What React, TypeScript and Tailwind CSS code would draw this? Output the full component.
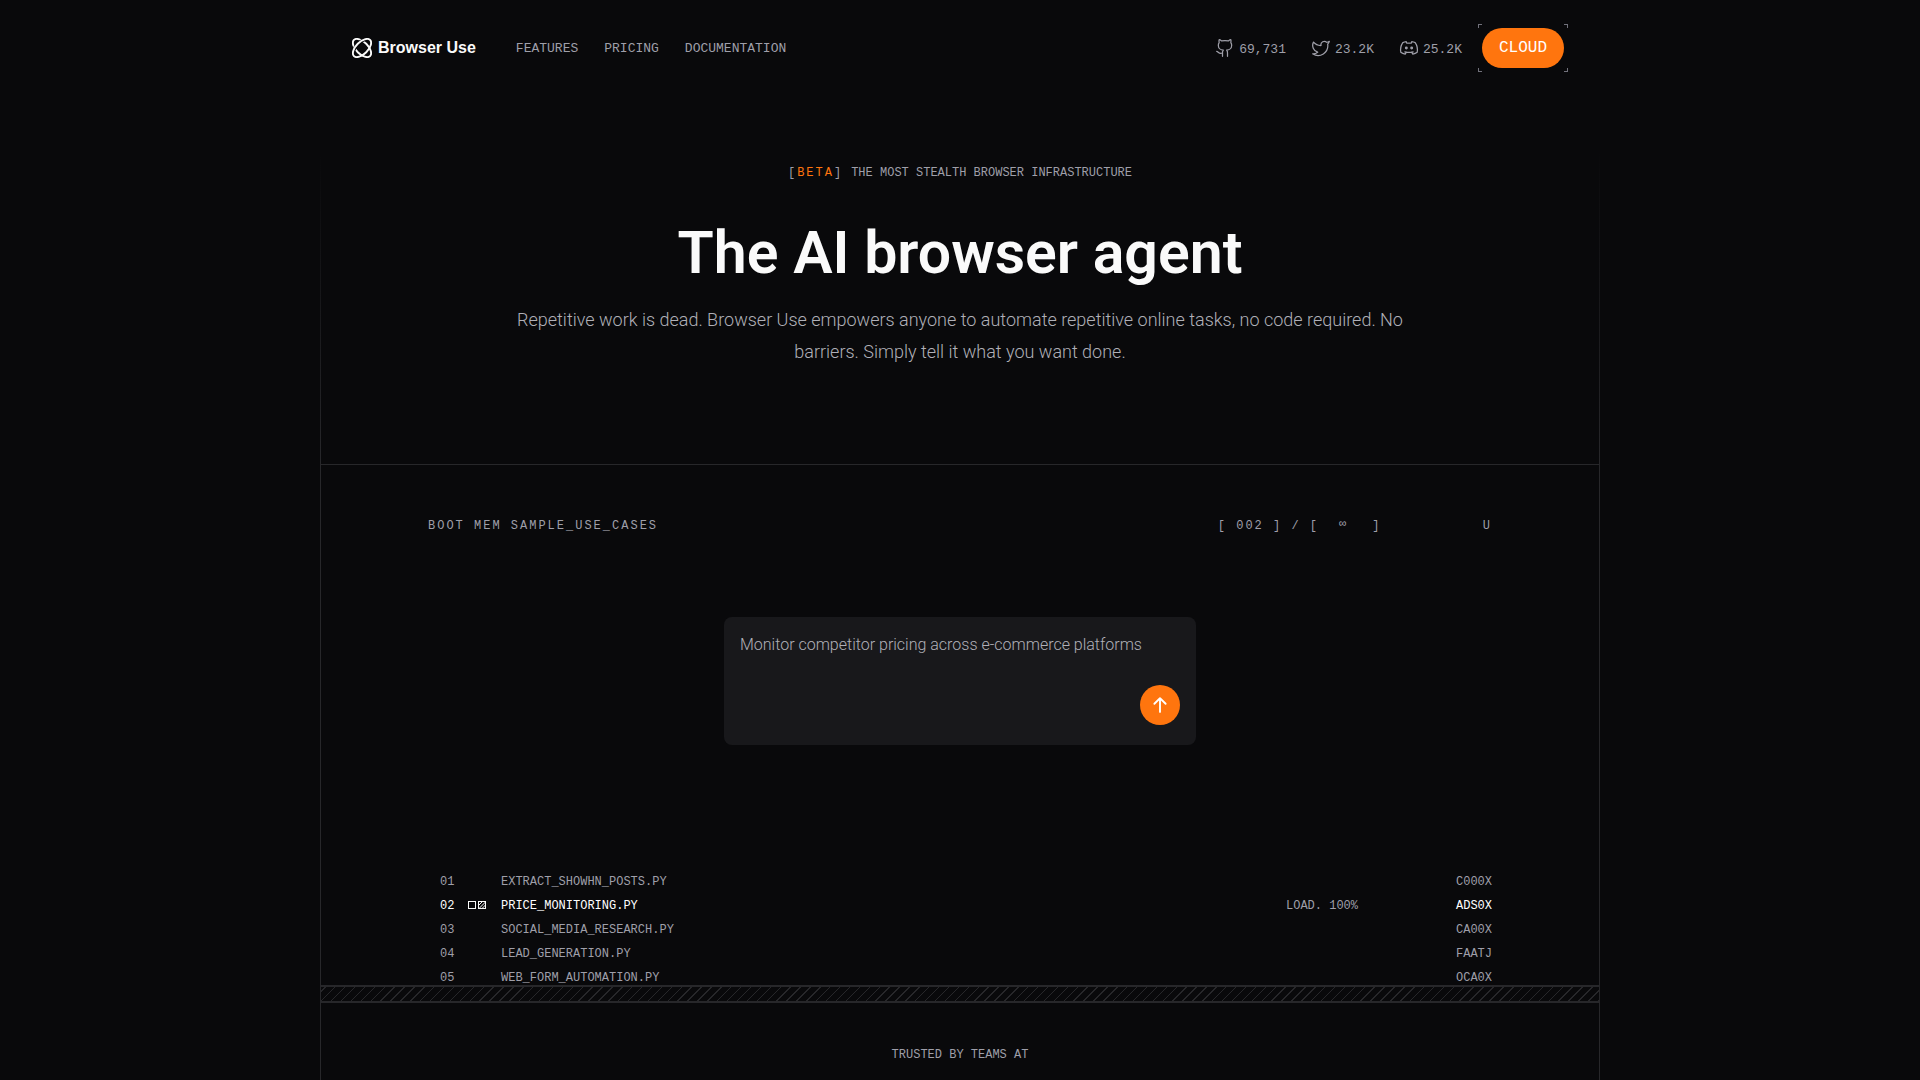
import type { ReactNode } from "react";
import { Github, Twitter } from "lucide-react";
import { PiArrowUpBold } from "react-icons/pi";

const navLinks = ["FEATURES", "PRICING", "DOCUMENTATION"];

function DiscordIcon() {
  return (
    <svg className="size-5" viewBox="0 0 24 24" fill="none" stroke="currentColor" strokeWidth="1.5" strokeLinecap="round" strokeLinejoin="round" aria-hidden="true">
      <path d="M8.6 17.2 7.4 19.4C5.5 19 3.7 18.3 2.2 17.2 1.4 13 2.2 9 4.6 5.6 5.9 5 7.3 4.6 8.7 4.4L9.5 6.3a15 15 0 0 1 5 0L15.3 4.4C16.7 4.6 18.1 5 19.4 5.6 21.8 9 22.6 13 21.8 17.2 20.3 18.3 18.5 19 16.6 19.4L15.4 17.2" />
      <path d="M7 16.6c3.3 1 6.7 1 10 0" />
      <circle cx="8.8" cy="12" r="1" fill="currentColor" />
      <circle cx="15.2" cy="12" r="1" fill="currentColor" />
    </svg>
  );
}

const socials: { label: string; icon: ReactNode; count: string }[] = [
  { label: "GitHub", icon: <Github className="size-5" strokeWidth={1.5} />, count: "69,731" },
  { label: "Twitter", icon: <Twitter className="size-5" strokeWidth={1.5} />, count: "23.2K" },
  { label: "Discord", icon: <DiscordIcon />, count: "25.2K" },
];

const scripts = [
  { num: "01", file: "EXTRACT_SHOWHN_POSTS.PY", code: "C000X", active: false },
  { num: "02", file: "PRICE_MONITORING.PY", code: "ADS0X", active: true },
  { num: "03", file: "SOCIAL_MEDIA_RESEARCH.PY", code: "CA00X", active: false },
  { num: "04", file: "LEAD_GENERATION.PY", code: "FAATJ", active: false },
  { num: "05", file: "WEB_FORM_AUTOMATION.PY", code: "OCA0X", active: false },
];

function Logo() {
  return (
    <svg className="size-5" viewBox="0 0 20 20" fill="none" aria-hidden="true">
      <ellipse cx="10" cy="10" rx="11.4" ry="6" transform="rotate(45 10 10)" stroke="#fafafa" strokeWidth="1.9" />
      <path d="M1.9 18.1 C-0.4 15.8 1.6 10.2 6 6 C10.2 1.6 15.8 -0.4 18.1 1.9" stroke="#09090b" strokeWidth="3.4" />
      <ellipse cx="10" cy="10" rx="11.4" ry="6" transform="rotate(-45 10 10)" stroke="#fafafa" strokeWidth="1.9" />
    </svg>
  );
}

function Header() {
  return (
    <header className="mx-auto flex w-full max-w-7xl items-center px-8 py-6">
      <a href="#" className="flex items-center gap-1.5 text-base font-bold text-zinc-50">
        <Logo />
        Browser Use
      </a>
      <nav className="ml-10 flex gap-[26px] pt-0.5 font-['Liberation_Mono',monospace] text-[13px] leading-5 text-[#9f9fa9]">
        {navLinks.map((link) => (
          <a key={link} href="#">{link}</a>
        ))}
      </nav>
      <div className="ml-auto flex items-center gap-[25px] font-['Liberation_Mono',monospace] text-[13px] leading-5 text-[#9f9fa9]">
        {socials.map((s) => (
          <a key={s.label} href="#" aria-label={s.label} className="flex items-center gap-1">
            {s.icon}
            <span className="pt-1">{s.count}</span>
          </a>
        ))}
      </div>
      <div className="relative ml-4 p-1">
        <span className="absolute top-0 left-0 size-1 border-t border-l border-[#71717b]" />
        <span className="absolute top-0 right-0 size-1 border-t border-r border-[#71717b]" />
        <span className="absolute bottom-0 left-0 size-1 border-b border-l border-[#71717b]" />
        <span className="absolute right-0 bottom-0 size-1 border-r border-b border-[#71717b]" />
        <button type="button" className="block h-10 rounded-full bg-[#ff750e] px-[17px] font-['Liberation_Mono',monospace] text-base text-white">
          CLOUD
        </button>
      </div>
    </header>
  );
}

function Hero() {
  return (
    <section className="mx-auto grid w-full max-w-7xl grid-cols-[1px_1fr_1px] border-b border-zinc-800">
      <div className="mt-14 bg-linear-to-b from-transparent to-zinc-800" />
      <div className="flex flex-col items-center px-8 pt-[69px] pb-24 text-center">
        <p className="flex gap-2 font-['Liberation_Mono',monospace] text-xs text-[#9f9fa9]">
          <span className="tracking-[2px]">[<span className="text-[#ff750e]">BETA</span>]</span>
          THE MOST STEALTH BROWSER INFRASTRUCTURE
        </p>
        <h1 className="mt-[39px] font-['Roboto',sans-serif] text-[59px] leading-[66px] font-semibold text-zinc-50">
          The AI browser agent
        </h1>
        <p className="mt-[18px] max-w-4xl font-['Roboto',sans-serif] text-lg leading-8 font-light text-[#b0b0b8]">
          Repetitive work is dead. Browser Use empowers anyone to automate repetitive online tasks, no code required. No
          barriers. Simply tell it what you want done.
        </p>
      </div>
      <div className="mt-14 bg-linear-to-b from-transparent to-zinc-800" />
    </section>
  );
}

function PromptCard() {
  return (
    <form className="mx-auto flex h-32 w-full max-w-[472px] flex-col justify-between rounded-lg bg-[#18181b] px-4 pt-4 pb-5">
      <input
        aria-label="Task"
        defaultValue="Monitor competitor pricing across e-commerce platforms"
        className="w-full bg-transparent font-['Roboto',sans-serif] text-base leading-6 font-light text-[#b0b0b8] outline-none"
      />
      <button type="button" aria-label="Run task" className="grid size-10 place-items-center self-end rounded-full bg-[#ff750e] text-white">
        <PiArrowUpBold className="size-5" />
      </button>
    </form>
  );
}

function ActiveMark() {
  return (
    <svg width="18" height="8" viewBox="0 0 18 8" fill="none" stroke="#fafafa" aria-hidden="true">
      <rect x="0.5" y="0.5" width="7" height="7" />
      <rect x="10.5" y="0.5" width="7" height="7" />
      <path d="M10.5 4.5 14.5 0.5M11 7.5 17.5 1M14 7.5 17.5 4" />
    </svg>
  );
}

function UseCases() {
  return (
    <section className="flex h-[520px] flex-col overflow-hidden px-8 pt-[53px]">
      <div className="mx-auto flex w-full max-w-[1064px] shrink-0 font-['Liberation_Mono',monospace] text-xs tracking-[2px] text-[#9f9fa9]">
        <h2>BOOT MEM SAMPLE_USE_CASES</h2>
        <p className="ml-auto flex w-[164px]">
          <span>[ 002 ] / [</span>
          <span className="-mt-0.5 ml-5">∞</span>
          <span className="ml-6">]</span>
        </p>
        <span className="ml-[101px]">U</span>
      </div>
      <div className="mt-[83px] shrink-0">
        <PromptCard />
      </div>
      <ol className="mx-auto mt-31 w-full max-w-[1064px] shrink-0 font-['Liberation_Mono',monospace] text-xs text-[#9f9fa9]">
        {scripts.map((s) => (
          <li key={s.num}>
            <button
              type="button"
              className={
                s.active
                  ? "grid h-6 w-full grid-cols-[28px_33px_1fr_170px_36px] items-center pl-3 text-left text-white"
                  : "grid h-6 w-full grid-cols-[28px_33px_1fr_170px_36px] items-center pl-3 text-left"
              }
            >
              <span className="pt-0.5">{s.num}</span>
              <span>{s.active && <ActiveMark />}</span>
              <span className="pt-0.5">{s.file}</span>
              <span className="pt-0.5 text-[#9f9fa9]">{s.active && "LOAD. 100%"}</span>
              <span className="pt-0.5">{s.code}</span>
            </button>
          </li>
        ))}
      </ol>
    </section>
  );
}

export default function App() {
  return (
    <div className="flex min-h-screen flex-col bg-zinc-950 font-['Liberation_Sans',sans-serif]">
      <Header />
      <Hero />
      <main className="mx-auto flex w-full max-w-7xl grow flex-col border-x border-zinc-800">
        <UseCases />
        <div className="h-[18px] shrink-0 border-y-2 border-zinc-800 bg-[repeating-linear-gradient(315deg,#27272a_0_1px,transparent_1px_7px)]" />
        <p className="pt-11 text-center font-['Liberation_Mono',monospace] text-xs text-[#9f9fa9]">TRUSTED BY TEAMS AT</p>
      </main>
    </div>
  );
}
